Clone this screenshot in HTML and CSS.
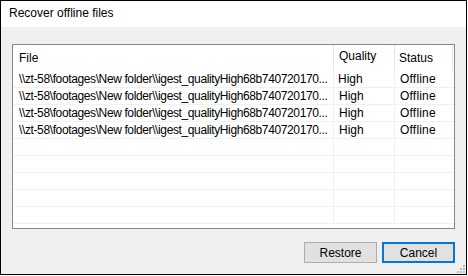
FILE: index.html
```html
<!DOCTYPE html>
<html>
<head>
<meta charset="utf-8">
<link rel="stylesheet" href="styles.css">
</head>
<body>
<div class="window">
  <div class="titlebar">Recover offline files</div>
  <div class="content">
    <div class="list">
      <div class="header">
        <div class="hcell c1">File</div>
        <div class="hcell c2 quality">Quality</div>
        <div class="hcell c3">Status</div>
        <div class="hcell c4"></div>
      </div>
      <div class="rows">
        <div class="row"><div class="cell c1">\\zt-58\footages\New folder\\igest_qualityHigh68b740720170...</div><div class="cell c2">High</div><div class="cell c3">Offline</div></div>
        <div class="row"><div class="cell c1">\\zt-58\footages\New folder\\igest_qualityHigh68b740720170...</div><div class="cell c2 shift">High</div><div class="cell c3">Offline</div></div>
        <div class="row"><div class="cell c1">\\zt-58\footages\New folder\\igest_qualityHigh68b740720170...</div><div class="cell c2 shift">High</div><div class="cell c3">Offline</div></div>
        <div class="row"><div class="cell c1">\\zt-58\footages\New folder\\igest_qualityHigh68b740720170...</div><div class="cell c2 shift">High</div><div class="cell c3">Offline</div></div>
        <div class="row"><div class="cell c1"></div><div class="cell c2"></div><div class="cell c3"></div></div>
        <div class="row"><div class="cell c1"></div><div class="cell c2"></div><div class="cell c3"></div></div>
        <div class="row"><div class="cell c1"></div><div class="cell c2"></div><div class="cell c3"></div></div>
        <div class="row"><div class="cell c1"></div><div class="cell c2"></div><div class="cell c3"></div></div>
        <div class="row"><div class="cell c1"></div><div class="cell c2"></div><div class="cell c3"></div></div>
      </div>
    </div>
    <div class="buttons">
      <button class="btn">Restore</button>
      <button class="btn default">Cancel</button>
    </div>
  </div>
  <svg class="grip" width="8" height="8" viewBox="0 0 8 8">
    <rect x="6" y="0" width="2" height="2" fill="#bfbfbf"/>
    <rect x="3" y="3" width="2" height="2" fill="#bfbfbf"/>
    <rect x="6" y="3" width="2" height="2" fill="#bfbfbf"/>
    <rect x="0" y="6" width="2" height="2" fill="#bfbfbf"/>
    <rect x="3" y="6" width="2" height="2" fill="#bfbfbf"/>
    <rect x="6" y="6" width="2" height="2" fill="#bfbfbf"/>
  </svg>
</div>
</body>
</html>
```
FILE: styles.css
```css
html, body {
  margin: 0;
  padding: 0;
  background: #ffffff;
}
body {
  font-family: "Liberation Sans", Arial, sans-serif;
  font-size: 12px;
  color: #000;
}
.window {
  position: relative;
  width: 467px;
  height: 275px;
  box-sizing: border-box;
  border: 1px solid #000;
  background: #f0f0f0;
  display: flex;
  flex-direction: column;
}
.titlebar {
  height: 26px;
  background: #fff;
  padding-left: 8px;
  line-height: 25px;
  font-size: 12px;
  flex: none;
}
.content {
  flex: 1;
  display: flex;
  flex-direction: column;
  padding: 17px 11px 0 11px;
}
.list {
  width: 443px;
  height: 185px;
  box-sizing: border-box;
  border: 1px solid #828790;
  background: #fff;
  overflow: hidden;
}
.header {
  display: grid;
  grid-template-columns: 321px 61px 58px 1fr;
  height: 26px;
}
.hcell {
  border-right: 1px solid #e5e5e5;
  line-height: 26px;
  padding-left: 6px;
  box-sizing: border-box;
  white-space: nowrap;
}
.hcell.c2 { padding-left: 5px; }
.hcell.c3 { padding-left: 4px; }
.hcell.c4 { border-right: none; }
.hcell.quality { line-height: 22px; }
.rows {
  display: flex;
  flex-direction: column;
}
.row {
  display: grid;
  grid-template-columns: 321px 61px 1fr;
  height: 17px;
  box-sizing: border-box;
  border-bottom: 1px solid #f0f0f0;
}
.cell {
  line-height: 16px;
  white-space: nowrap;
  overflow: hidden;
  box-sizing: border-box;
}
.cell.c1 {
  padding-left: 6px;
  border-right: 1px solid #f0f0f0;
  letter-spacing: -0.38px;
}
.cell.c2 { padding-left: 4px; border-right: 1px solid #f0f0f0; }
.cell.c2.shift { padding-left: 5px; }
.cell.c3 { padding-left: 5px; letter-spacing: 0.2px; }
.buttons {
  display: flex;
  justify-content: flex-end;
  gap: 5px;
  margin-top: 13px;
}
.btn {
  font-family: "Liberation Sans", Arial, sans-serif;
  font-size: 12px;
  color: #000;
  width: 73px;
  height: 21px;
  box-sizing: border-box;
  background: #e1e1e1;
  border: 1px solid #adadad;
  padding: 0;
  margin: 0;
  border-radius: 0;
}
.btn.default {
  border: 2px solid #0078d7;
}
.grip {
  position: absolute;
  right: 1px;
  bottom: 1px;
}
```
